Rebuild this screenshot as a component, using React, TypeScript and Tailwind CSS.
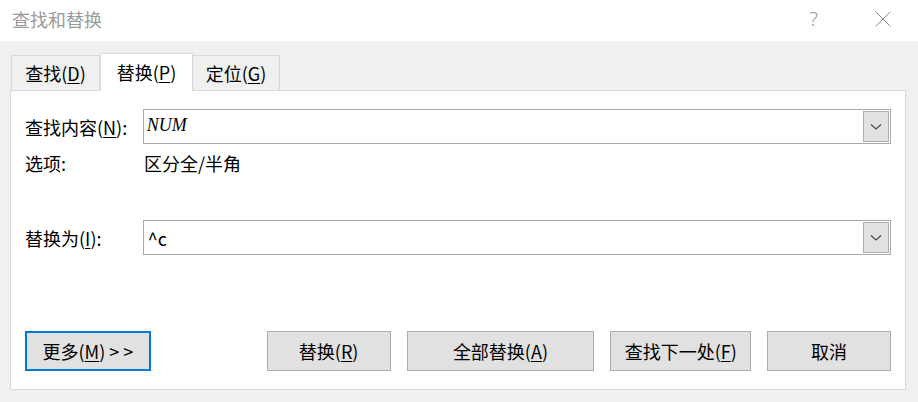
import React from "react";

const cjk = { fontFamily: '"Noto Sans CJK SC", "Noto Sans", sans-serif' };

function Chevron() {
  return (
    <svg width="12" height="8" viewBox="0 0 12 8">
      <path d="M1 1.5 L6 6 L11 1.5" fill="none" stroke="#444" strokeWidth="1.1" />
    </svg>
  );
}

function Combo({ children }: { children: React.ReactNode }) {
  return (
    <div className="flex h-[35px] w-[749px] border border-[#a9a9a9] bg-white">
      <div className="flex-1 min-w-0 pl-[3px] flex">{children}</div>
      <div className="m-[1px] w-[26px] border border-[#adadad] bg-[#e1e1e1] flex items-center justify-center">
        <Chevron />
      </div>
    </div>
  );
}

function Btn({ w, children, focus }: { w: string; children: React.ReactNode; focus?: boolean }) {
  return (
    <div
      className={
        "h-[40px] flex items-center justify-center bg-[#e1e1e1] text-[18px] leading-none text-black " +
        w +
        (focus ? " border-2 border-[#0078d7]" : " border border-[#adadad]")
      }
    >
      {children}
    </div>
  );
}

export default function App() {
  return (
    <div className="w-[918px] h-[402px] bg-[#f0f0f0] overflow-hidden" style={cjk}>
      {/* title bar */}
      <div className="h-[41px] bg-white flex items-center relative">
        <div className="ml-[12px] text-[18px] leading-none text-[#9a9a9a] mt-[-4px]">查找和替换</div>
        <div className="flex-1" />
        <div className="text-[20px] leading-none text-[#9a9a9a] mr-[57px] mt-[-4px]" style={{ fontFamily: '"Noto Sans", sans-serif', fontWeight: 300 }}>?</div>
        <svg width="16" height="16" viewBox="0 0 16 16" className="mr-[27px] mt-[-4px]">
          <path d="M0.5 0.5 L15.5 15.5 M15.5 0.5 L0.5 15.5" stroke="#8a8a8a" strokeWidth="1" />
        </svg>
      </div>

      {/* tabs */}
      <div className="flex items-end h-[49px] pl-[11px] relative z-10">
        <div className="w-[89px] h-[35px] border border-b-0 border-[#d9d9d9] bg-[#f0f0f0] flex items-center justify-center text-[18px] leading-none text-black">
          查找(<span className="underline underline-offset-2">D</span>)
        </div>
        <div className="w-[93px] h-[38px] border border-b-0 border-[#d9d9d9] bg-white flex items-center justify-center text-[18px] leading-none text-black mb-[-1px] pb-[2px]">
          替换(<span className="underline underline-offset-2">P</span>)
        </div>
        <div className="w-[87px] h-[35px] border border-b-0 border-l-0 border-[#d9d9d9] bg-[#f0f0f0] flex items-center justify-center text-[18px] leading-none text-black">
          定位(<span className="underline underline-offset-2">G</span>)
        </div>
      </div>

      {/* panel */}
      <div className="ml-[10px] w-[896px] h-[300px] border border-[#d9d9d9] bg-white px-[14px] pt-[18px] text-[18px] text-black">
        <div className="flex items-center">
          <div className="w-[118px] leading-none">
            查找内容(<span className="underline underline-offset-2">N</span>):
          </div>
          <Combo>
            <span
              className="text-[18px] italic leading-none pt-[6px]"
              style={{ fontFamily: '"Liberation Serif", "DejaVu Serif", serif' }}
            >
              NUM
            </span>
          </Combo>
        </div>
        <div className="flex items-center h-[24px] mt-[7px]">
          <div className="w-[119px] leading-none">选项:</div>
          <div className="leading-none">区分全/半角</div>
        </div>
        <div className="flex items-center mt-[45px]">
          <div className="w-[118px] leading-none">
            替换为(<span className="underline underline-offset-2">I</span>):
          </div>
          <Combo>
            <span className="text-[18px] leading-none self-center pl-[1px]">^c</span>
          </Combo>
        </div>
        <div className="flex mt-[76px]">
          <Btn w="w-[126px]" focus>
            更多(<span className="underline underline-offset-2">M</span>)&nbsp;&gt; &gt;
          </Btn>
          <div className="w-[116px]" />
          <Btn w="w-[124px]">
            替换(<span className="underline underline-offset-2">R</span>)
          </Btn>
          <div className="w-[16px]" />
          <Btn w="w-[188px]">
            全部替换(<span className="underline underline-offset-2">A</span>)
          </Btn>
          <div className="w-[16px]" />
          <Btn w="w-[141px]">
            查找下一处(<span className="underline underline-offset-2">F</span>)
          </Btn>
          <div className="w-[16px]" />
          <Btn w="w-[124px]">取消</Btn>
        </div>
      </div>
    </div>
  );
}
